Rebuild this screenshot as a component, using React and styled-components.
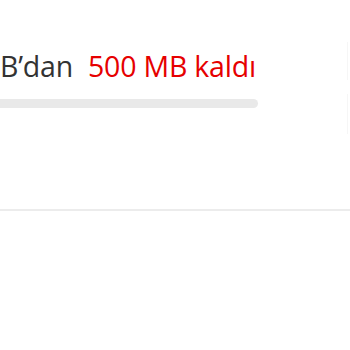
import React from "react";
import styled, { createGlobalStyle } from "styled-components";

const GlobalStyle = createGlobalStyle`
  html, body {
    margin: 0;
    padding: 0;
    background: #ffffff;
    overflow: hidden;
  }
  body {
    font-family: "Open Sans", "Liberation Sans", sans-serif;
  }
`;

const Page = styled.div`
  width: 350px;
  height: 350px;
  display: flex;
  flex-direction: column;
`;

const UsageCard = styled.div`
  display: flex;
  height: 211px;
  border-bottom: 2px solid #ececec;
  box-sizing: border-box;
`;

const UsageBody = styled.div`
  flex: 1;
  padding-top: 47px;
  display: flex;
  flex-direction: column;
`;

const Summary = styled.div`
  display: flex;
  align-items: baseline;
  gap: 15px;
  font-size: 28.5px;
  line-height: 38px;
  letter-spacing: -0.2px;
  white-space: nowrap;
`;

const Total = styled.span`
  color: #333333;
`;

const Remaining = styled.span`
  color: #e60000;
`;

const Track = styled.div`
  margin-top: 14px;
  width: 258px;
  height: 9px;
  background: #e9e9e9;
  border-radius: 0 5px 5px 0;
`;

const SideRail = styled.div`
  width: 3px;
  padding-top: 42px;
  display: flex;
  flex-direction: column;
  gap: 14px;
`;

const RailMark = styled.div`
  width: 1px;
  height: ${(p) => p.$h}px;
  background: #f6f6f6;
`;

export default function App() {
  return (
    <>
      <GlobalStyle />
      <Page>
        <UsageCard>
          <UsageBody>
            <Summary>
              <Total>B’dan</Total>
              <Remaining>500 MB kaldı</Remaining>
            </Summary>
            <Track />
          </UsageBody>
          <SideRail>
            <RailMark $h={38} />
            <RailMark $h={40} />
          </SideRail>
        </UsageCard>
      </Page>
    </>
  );
}
